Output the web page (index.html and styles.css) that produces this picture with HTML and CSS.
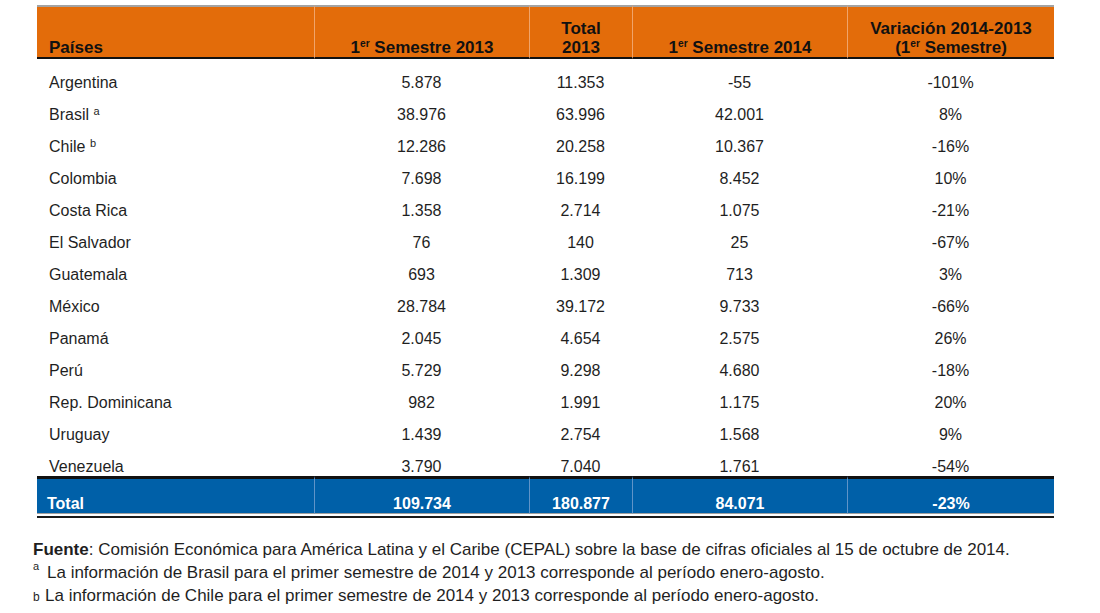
FILE: index.html
```html
<!DOCTYPE html>
<html lang="es">
<head>
    <meta charset="UTF-8">
    <title>Inversión extranjera directa - América Latina</title>
    <link rel="stylesheet" href="styles.css">
</head>
<body>
    <div class="page">
        <table class="ied-table">
            <colgroup>
                <col class="col-pais">
                <col class="col-sem">
                <col class="col-total">
                <col class="col-sem">
                <col class="col-var">
            </colgroup>
            <thead>
                <tr>
                    <th class="left">Países</th>
                    <th>1<sup>er</sup> Semestre 2013</th>
                    <th>Total<br>2013</th>
                    <th>1<sup>er</sup> Semestre 2014</th>
                    <th>Variación 2014-2013<br>(1<sup>er</sup> Semestre)</th>
                </tr>
            </thead>
            <tbody>
                <tr><td class="left">Argentina</td><td>5.878</td><td>11.353</td><td>-55</td><td>-101%</td></tr>
                <tr><td class="left">Brasil <sup class="note-ref">a</sup></td><td>38.976</td><td>63.996</td><td>42.001</td><td>8%</td></tr>
                <tr><td class="left">Chile <sup class="note-ref">b</sup></td><td>12.286</td><td>20.258</td><td>10.367</td><td>-16%</td></tr>
                <tr><td class="left">Colombia</td><td>7.698</td><td>16.199</td><td>8.452</td><td>10%</td></tr>
                <tr><td class="left">Costa Rica</td><td>1.358</td><td>2.714</td><td>1.075</td><td>-21%</td></tr>
                <tr><td class="left">El Salvador</td><td>76</td><td>140</td><td>25</td><td>-67%</td></tr>
                <tr><td class="left">Guatemala</td><td>693</td><td>1.309</td><td>713</td><td>3%</td></tr>
                <tr><td class="left">México</td><td>28.784</td><td>39.172</td><td>9.733</td><td>-66%</td></tr>
                <tr><td class="left">Panamá</td><td>2.045</td><td>4.654</td><td>2.575</td><td>26%</td></tr>
                <tr><td class="left">Perú</td><td>5.729</td><td>9.298</td><td>4.680</td><td>-18%</td></tr>
                <tr><td class="left">Rep. Dominicana</td><td>982</td><td>1.991</td><td>1.175</td><td>20%</td></tr>
                <tr><td class="left">Uruguay</td><td>1.439</td><td>2.754</td><td>1.568</td><td>9%</td></tr>
                <tr><td class="left">Venezuela</td><td>3.790</td><td>7.040</td><td>1.761</td><td>-54%</td></tr>
            </tbody>
            <tfoot>
                <tr>
                    <td class="left">Total</td>
                    <td>109.734</td>
                    <td>180.877</td>
                    <td>84.071</td>
                    <td>-23%</td>
                </tr>
            </tfoot>
        </table>

        <div class="notes">
            <p><b>Fuente</b>: Comisión Económica para América Latina y el Caribe (CEPAL) sobre la base de cifras oficiales al 15 de octubre de 2014.</p>
            <p><span class="mark-a">a</span>La información de Brasil para el primer semestre de 2014 y 2013 corresponde al período enero-agosto.</p>
            <p><span class="mark-b">b</span>La información de Chile para el primer semestre de 2014 y 2013 corresponde al período enero-agosto.</p>
        </div>
    </div>
</body>
</html>
```

FILE: styles.css
```css
body {
    margin: 0;
    background: white;
    font-family: "Liberation Sans", Arial, sans-serif;
    color: #1f1f1f;
}

.page {
    padding: 5px 0 0 37px;
}

.ied-table {
    width: 1017px;
    table-layout: fixed;
    border-collapse: separate;
    border-spacing: 0;
    border-bottom: 2px solid #1a1a1a;
    padding-bottom: 2px;
}

.col-pais { width: 277px; }
.col-sem { width: 215px; }
.col-total { width: 103px; }
.col-var { width: 207px; }

.ied-table th,
.ied-table td {
    padding: 0;
    text-align: center;
    vertical-align: bottom;
    white-space: nowrap;
}

.ied-table .left {
    text-align: left;
    padding-left: 12px;
}

/* header */
.ied-table th {
    height: 50px;
    background: #e36c0a;
    color: #111;
    font-size: 17px;
    font-weight: bold;
    line-height: 19px;
    border-top: 2px solid #a3a3a3;
    border-bottom: 2px solid #111;
}

.ied-table th + th {
    border-left: 1px solid #f0a46a;
}

.ied-table sup {
    font-size: 0.6em;
    line-height: 0;
    vertical-align: 0.55em;
}

.ied-table sup.note-ref {
    font-size: 11px;
    vertical-align: 0.5em;
}

/* body rows */
.ied-table tbody td {
    height: 32px;
    font-size: 16px;
    line-height: 18px;
}

.ied-table tbody tr:first-child td {
    height: 33px;
}

/* total row */
.ied-table tfoot td {
    height: 34px;
    background: #0060a8;
    color: white;
    font-size: 16px;
    font-weight: bold;
    line-height: 18px;
    border-top: 3px solid #111;
    border-bottom: 1px solid #a0a0a0;
}

.ied-table tfoot td + td {
    border-left: 1px solid #5f94c8;
}

.ied-table tfoot .left {
    padding-left: 10px;
}

/* notes */
.notes {
    margin-top: 20px;
    margin-left: -4px;
    font-size: 17px;
    line-height: 23px;
    color: #1f1f1f;
}

.notes p {
    margin: 0;
}

.mark-a {
    display: inline-block;
    width: 14px;
    font-size: 11px;
    vertical-align: 0.7em;
    line-height: 0;
}

.mark-b {
    display: inline-block;
    width: 12px;
    font-size: 12px;
}
```
